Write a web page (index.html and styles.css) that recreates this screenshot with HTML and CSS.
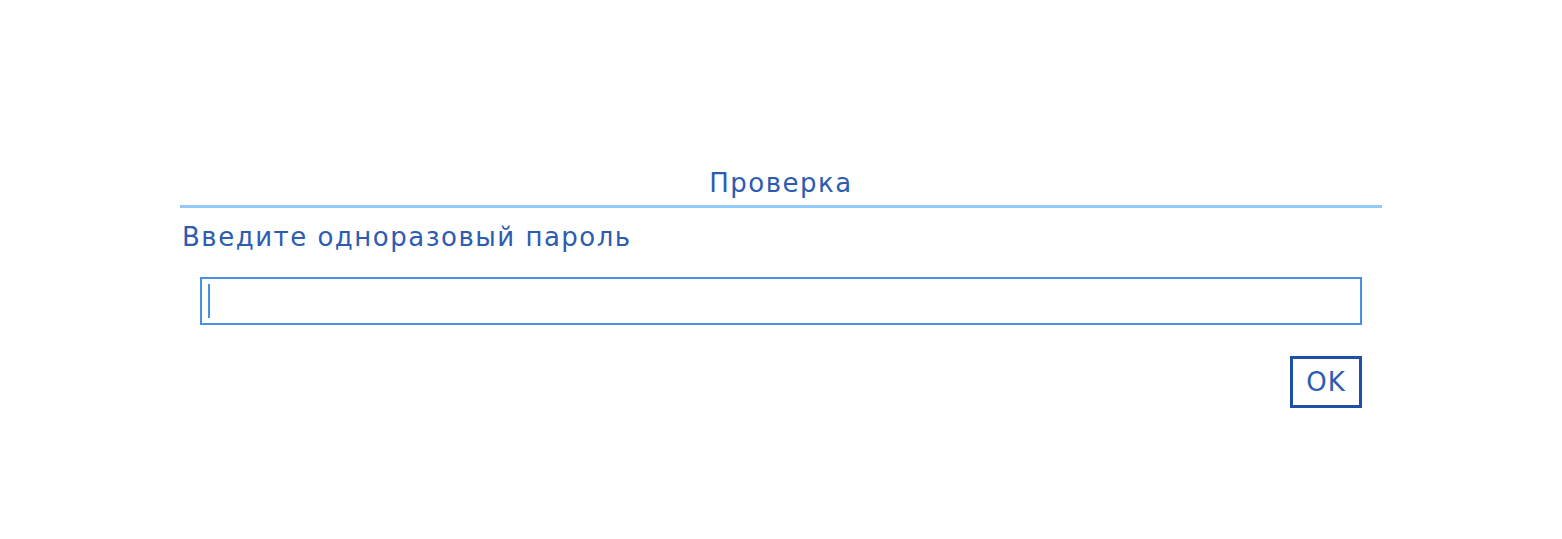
FILE: index.html
```html
<!DOCTYPE html>
<html lang="ru">
<head>
    <meta charset="UTF-8">
    <title>Проверка</title>
    <link rel="stylesheet" href="styles.css">
</head>
<body>
    <div class="dialog">
        <div class="dialog-title">Проверка</div>
        <div class="dialog-label">Введите одноразовый пароль</div>
        <div class="field">
            <div class="input"><span class="caret"></span></div>
        </div>
        <div class="actions">
            <button class="ok">OK</button>
        </div>
    </div>
</body>
</html>
```

FILE: styles.css
```css
body {
    margin: 0;
    background: #fff;
    font-family: "DejaVu Sans", Verdana, sans-serif;
    color: #2d5cb0;
    letter-spacing: 1.5px;
}
.dialog {
    width: 1202px;
    margin: 0 auto;
    padding-top: 164px;
}
.dialog-title {
    text-align: center;
    font-size: 26px;
    line-height: 38px;
    border-bottom: 3px solid #93c9f7;
    padding-bottom: 3px;
}
.dialog-label {
    font-size: 26px;
    line-height: 32px;
    padding: 13px 0 0 2px;
}
.field {
    padding: 24px 20px 0 20px;
}
.input {
    height: 44px;
    border: 2px solid #4a90e2;
    display: flex;
    align-items: center;
    padding-left: 6px;
}
.caret {
    width: 2px;
    height: 34px;
    background: #4a90e2;
}
.actions {
    display: flex;
    justify-content: flex-end;
    padding: 31px 20px 0 0;
}
.ok {
    width: 72px;
    height: 52px;
    border: 3px solid #1f4fa8;
    background: #fff;
    color: #2d5cb0;
    font-family: inherit;
    font-size: 26px;
    letter-spacing: 1px;
    padding: 0;
}
```
